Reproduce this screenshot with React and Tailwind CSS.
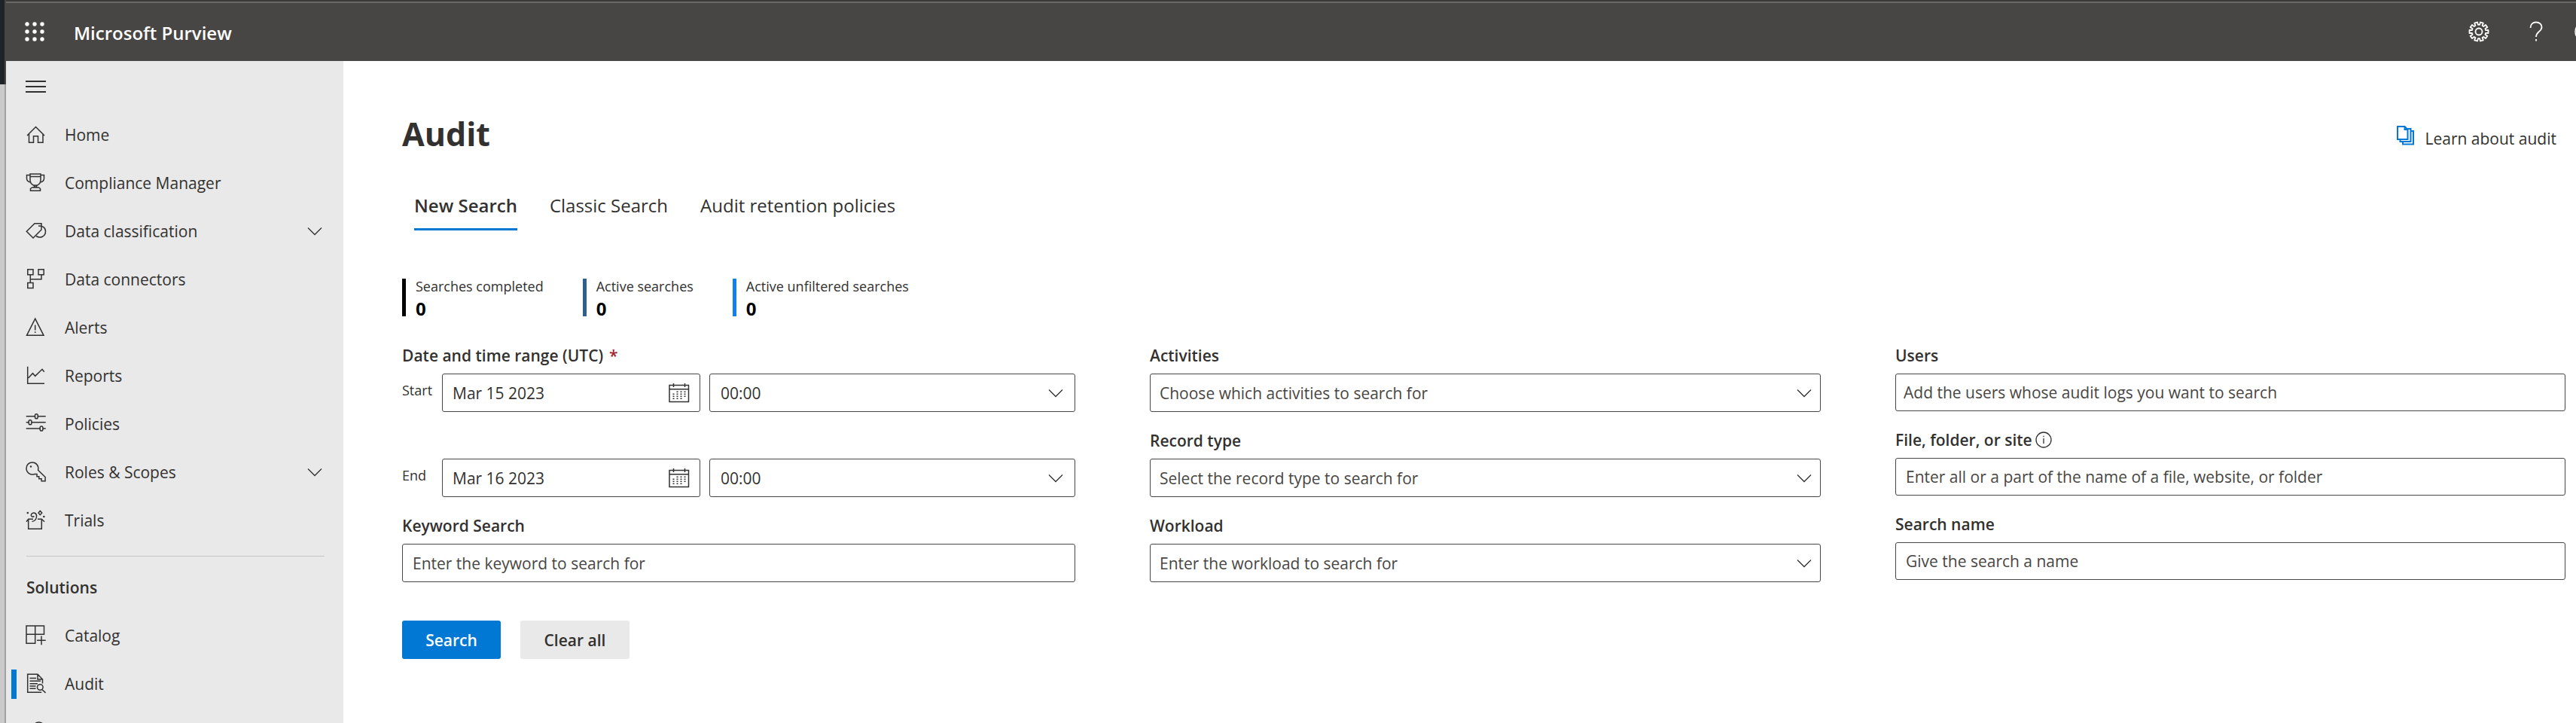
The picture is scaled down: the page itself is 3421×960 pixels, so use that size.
const STROKE = { fill: "none", stroke: "currentColor", strokeWidth: 1.5 };

function Icon({ children, className = "" }) {
  return (
    <svg viewBox="0 0 28 28" className={`size-7 shrink-0 ${className}`} {...STROKE} aria-hidden="true">
      {children}
    </svg>
  );
}

const icons = {
  home: <path d="M2 15 13.5 3.5 25 15M4.5 13v11.2h6V15.7h6v8.5h6.500V13" />,
  trophy: (
    <path d="M6 2h14v8c0 4-2.500 6-4.500 7h-5C8.500 16 6 14 6 10zM6 5.500h14M6 3.500H1.500V8c0 3 2 4.500 5 5M20 3.500h4.500V8c0 3-2 4.500-5 5M10.500 17l1.500 1.500-1.500 1.500M15.500 17 14 18.500l1.500 1.500M6.500 24.200v-2.700L8.500 20h9l2 1.500v2.700z" />
  ),
  tag: <path d="M1.300 14.300 12 3.700h9V12L10 23zM17 7c5-.5 9.500 2 9.500 7.300 0 6.700-7 9.700-12.500 6.200" />,
  connectors: <path d="M2.800.8H10v7H2.800zM17 .8h7.200v7H17zM2.800 18.500H10v7H2.800zM6.300 8v10.500M6.300 13.700H21V8" />,
  alert: <path d="M12.700 2.200 24 24.300H1.500zM12.700 10.500v7M12.700 19.300v1.700" />,
  chart: <path d="M2.700 1.700v22.600H25M3.500 17l6-6.300 3.200 3.600 9.300-9 2.700 3.400" />,
  sliders: (
    <>
      <path d="M.7 3.700h11.800M16.200 3.700h10.500M.7 11.700h3.500M8 11.700h18.700M.7 20h18.500M23 20h3.700" />
      <rect x="12.500" y=".8" width="3.700" height="6" rx="1.800" />
      <rect x="4.200" y="8.700" width="3.700" height="6" rx="1.800" />
      <rect x="19.200" y="17" width="3.700" height="6" rx="1.800" />
    </>
  ),
  key: (
    <>
      <path d="M12 16.500C6.500 18.500 1 14.500 1 9 1 4 4.500 1 9 1c5 0 9 4.500 7.600 10.200l9.500 9.300v5.200h-5v-3h-3.300v-3H15v-3.200z" />
      <circle cx="7" cy="6.500" r="1.200" fill="currentColor" stroke="none" />
    </>
  ),
  trials: (
    <>
      <path d="M1 15.700l2.700-3.400H10M3.700 12.300v13h17.600v-13M16 12.300h5.300l3.700 3.400M8.500 15.500c4-.3 6.700-4 6-8C14 3.500 9 2.700 7.500 6c-.8 2.500 2 4.500 3.800 2.200M19.300 1.300l2.400 2.700-2.400 2.700L17 4z" />
      <circle cx="2.800" cy="4" r="1.300" fill="currentColor" stroke="none" />
      <circle cx="24.300" cy="9" r="1.300" fill="currentColor" stroke="none" />
    </>
  ),
  catalog: <path d="M1 1h23.500v11.300H1zM12.700 1v23.300H1V12M21 14.500v11.700M15 20.300h11.700" />,
  audit: (
    <>
      <path d="M22.500 13.500V8L16 1.200H2.700v24.100h18.500M16 1.200V8h6.500M5.500 6.500H14M5.500 10.300h14.500M5.500 13.700H16M5.500 17h8M5.500 20.300h8M22 21.700l4.500 4.200" />
      <circle cx="19.300" cy="18.500" r="3.800" />
    </>
  ),
  search: (
    <>
      <circle cx="17.500" cy="9" r="8" />
      <path d="M12 15 1 26" />
    </>
  ),
};

function Chevron() {
  return (
    <svg viewBox="0 0 20 12" className="h-3 w-5 shrink-0" {...STROKE} strokeWidth="1.300" aria-hidden="true">
      <path d="m1 1.500 9 9 9-9" />
    </svg>
  );
}

function CalendarIcon() {
  return (
    <svg viewBox="0 0 28 26" className="h-[26px] w-7" {...STROKE} aria-hidden="true">
      <path d="M1 2.500h25.500v22H1zM1 7.700h25.500M6.500 0v5M21.500 0v5" />
      <path strokeWidth="2" strokeDasharray="1.500 1.500" d="M6.500 13.500v8M11.500 10.500v11M16.500 10.500v11M21.500 10.500v8" />
    </svg>
  );
}

const TEETH = 10;
const gearPath = (() => {
  const points = [];
  for (let i = 0; i < TEETH; i++) {
    const mid = (i + 0.5) * ((2 * Math.PI) / TEETH) - Math.PI / 2;
    for (const [r, off] of [[9.3, -0.2], [12.7, -0.16], [12.7, 0.16], [9.3, 0.2]]) {
      points.push(`${(14 + r * Math.cos(mid + off)).toFixed(1)} ${(14 + r * Math.sin(mid + off)).toFixed(1)}`);
    }
  }
  return `M${points.join("L")}Z`;
})();

function NavItem({ icon, label, expandable, active }) {
  return (
    <li className="flex h-16 items-center">
      <span className={`ml-[7px] h-[39px] w-[7px] shrink-0 ${active ? "bg-[#0078d4]" : ""}`} />
      <a href="#" className="flex h-full grow items-center gap-6 pr-7 pl-3">
        <Icon>{icons[icon]}</Icon>
        {label && <span className="grow whitespace-nowrap">{label}</span>}
        {expandable && <Chevron />}
      </a>
    </li>
  );
}

const mainNav = [
  { icon: "home", label: "Home" },
  { icon: "trophy", label: "Compliance Manager" },
  { icon: "tag", label: "Data classification", expandable: true },
  { icon: "connectors", label: "Data connectors" },
  { icon: "alert", label: "Alerts" },
  { icon: "chart", label: "Reports" },
  { icon: "sliders", label: "Policies" },
  { icon: "key", label: "Roles & Scopes", expandable: true },
  { icon: "trials", label: "Trials" },
];

const BOX = "w-full rounded-[3px] border border-[#484644] bg-white";

function Label({ htmlFor, children }) {
  return (
    <label htmlFor={htmlFor} className="mb-2 flex h-8 items-center font-semibold whitespace-nowrap">
      {children}
    </label>
  );
}

function Select({ id, text, label, muted }) {
  return (
    <div className="relative flex grow items-center">
      <select
        id={id}
        aria-label={label}
        className={`${BOX} h-[51px] appearance-none ${muted ? "px-3 text-[#484644]" : "px-3.5"}`}
      >
        <option>{text}</option>
      </select>
      <span className={`pointer-events-none absolute ${muted ? "right-3" : "right-4"}`}>
        <Chevron />
      </span>
    </div>
  );
}

function DateRow({ name, date }) {
  const id = `${name.toLowerCase()}-date`;
  return (
    <div className="flex">
      <label htmlFor={id} className="w-[53px] shrink-0 pt-1.5 text-lg leading-8">
        {name}
      </label>
      <div className="relative mr-3 flex w-[343px] shrink-0 items-center">
        <input id={id} type="text" defaultValue={date} className={`${BOX} h-[51px] px-[13px]`} />
        <span className="pointer-events-none absolute right-3.5">
          <CalendarIcon />
        </span>
      </div>
      <Select id={`${name.toLowerCase()}-time`} label={`${name} time`} text="00:00" />
    </div>
  );
}

function SelectField({ id, label, text }) {
  return (
    <div>
      <Label htmlFor={id}>{label}</Label>
      <Select id={id} text={text} muted />
    </div>
  );
}

function TextField({ id, label, placeholder, size, info }) {
  return (
    <div>
      <Label htmlFor={id}>
        {label}
        {info && (
          <svg viewBox="0 0 22 22" className="ml-1 size-[22px]" {...STROKE} strokeWidth="1.300" aria-hidden="true">
            <circle cx="11" cy="11" r="10" />
            <path d="M11 9v7M11 5.700v1.600" />
          </svg>
        )}
      </Label>
      <input
        id={id}
        type="text"
        placeholder={placeholder}
        className={`${BOX} ${size} block placeholder:text-[#484644]`}
      />
    </div>
  );
}

const tabs = ["New Search", "Classic Search", "Audit retention policies"];

const stats = [
  { label: "Searches completed", bar: "border-black" },
  { label: "Active searches", bar: "border-[#2f5f8f]" },
  { label: "Active unfiltered searches", bar: "border-[#1080f0]" },
];

export default function App() {
  return (
    <div className="flex h-screen overflow-hidden bg-white font-['Open_Sans','Noto_Sans',sans-serif] text-[21px] leading-8 text-[#323130]">
      <div className="flex w-2 shrink-0 flex-col">
        <div className="h-28 border-r-2 border-[#484644] bg-[#1f2428]" />
        <div className="grow border-r-2 border-[#a0a0a0] bg-[#cacaca]" />
      </div>
      <div className="flex min-w-0 grow flex-col">
        <header className="flex h-[81px] shrink-0 items-center overflow-hidden border-t-2 border-[#3b3a39] bg-[#484644] text-white shadow-[inset_0_2px_0_#6b6967]">
          <button type="button" aria-label="App launcher" className="ml-[25px]">
            <svg viewBox="0 0 26 26" className="size-[26px]" fill="currentColor" aria-hidden="true">
              {[3, 13, 23].map((y) => [3, 13, 23].map((x) => <circle key={`${x}-${y}`} cx={x} cy={y} r="2.700" />))}
            </svg>
          </button>
          <span className="ml-[39px] grow pt-1 text-2xl leading-8 font-semibold">Microsoft Purview</span>
          <div className="-mr-[39px] flex shrink-0">
            <button type="button" aria-label="Settings" className="flex w-[76px] justify-center">
              <Icon>
                <path d={gearPath} strokeWidth="1.800" strokeLinejoin="round" />
                <circle cx="14" cy="14" r="4.500" strokeWidth="1.800" />
              </Icon>
            </button>
            <button type="button" aria-label="Help" className="flex w-[76px] justify-center">
              <Icon>
                <path
                  strokeWidth="1.800"
                  d="M6.500 9C6.500 4 10 1.500 14 1.500s7.500 2.500 7.500 6.500c0 6-7.500 6-7.500 13M14 24v2.500"
                />
              </Icon>
            </button>
            <button type="button" aria-label="Feedback" className="flex w-[54px] justify-center">
              <Icon>
                <circle cx="14" cy="14" r="13" />
              </Icon>
            </button>
          </div>
        </header>
        <div className="flex min-h-0 grow">
          <nav className="w-[448px] shrink-0 overflow-hidden bg-[#e9e9e9]">
            <button type="button" aria-label="Collapse navigation" className="flex h-[66px] items-center pt-0.5 pl-[26px]">
              <Icon>
                <path strokeWidth="2" d="M0 7h27M0 14h27M0 21h27" />
              </Icon>
            </button>
            <ul>
              {mainNav.map((item) => (
                <NavItem key={item.label} {...item} />
              ))}
            </ul>
            <hr className="mt-[15px] mr-[25px] mb-[9px] ml-[27px] border-[#c8c6c4]" />
            <h2 className="flex h-16 items-center pl-[27px] font-semibold">Solutions</h2>
            <ul>
              <NavItem icon="catalog" label="Catalog" />
              <NavItem icon="audit" label="Audit" active />
              <NavItem icon="search" />
            </ul>
          </nav>
          <main className="min-w-0 grow pt-[65px] pr-3.5 pl-[78px]">
            <div className="flex items-center justify-between pr-3">
              <h1 className="text-[43px] leading-[64px] font-bold">Audit</h1>
              <a href="#" className="mt-1 flex items-center gap-3.5">
                <svg viewBox="0 0 24 26" className="h-[26px] w-6 text-[#0078d4]" {...STROKE} strokeWidth="2" aria-hidden="true">
                  <path d="M1 1h9.500l4 4v13H1zM10.500 1v4h4M14.500 4h4v17H4.500v-3M18.500 7H22v17.500H8V21" />
                </svg>
                <span className="pt-2">Learn about audit</span>
              </a>
            </div>
            <div role="tablist" className="mt-8 ml-4 flex gap-[43px] text-2xl">
              {tabs.map((tab, i) => (
                <button
                  key={tab}
                  type="button"
                  role="tab"
                  aria-selected={i === 0}
                  className={`h-16 border-b-[3px] ${i === 0 ? "border-[#0078d4] font-semibold" : "border-transparent"}`}
                >
                  {tab}
                </button>
              ))}
            </div>
            <div className="mt-16 flex gap-[52px]">
              {stats.map((s) => (
                <div key={s.label} className={`h-[50px] border-l-[5px] pl-[13px] ${s.bar}`}>
                  <div className="text-lg leading-[20px]">{s.label}</div>
                  <div className="text-2xl leading-10 font-bold text-black">0</div>
                </div>
              ))}
            </div>
            <form className="mt-9">
              <div className="grid grid-cols-[894fr_891fr_890fr] gap-x-[99px]">
                <div className="flex flex-col gap-[22px]">
                  <div>
                    <Label htmlFor="start-date">
                      Date and time range (UTC) <span className="ml-2 text-[#a4262c]">*</span>
                    </Label>
                    <DateRow name="Start" date="Mar 15 2023" />
                  </div>
                  <div className="pt-10">
                    <DateRow name="End" date="Mar 16 2023" />
                  </div>
                  <TextField
                    id="keyword"
                    label="Keyword Search"
                    placeholder="Enter the keyword to search for"
                    size="h-[51px] px-[13px]"
                  />
                </div>
                <div className="flex flex-col gap-[22px]">
                  <SelectField id="activities" label="Activities" text="Choose which activities to search for" />
                  <SelectField id="record-type" label="Record type" text="Select the record type to search for" />
                  <SelectField id="workload" label="Workload" text="Enter the workload to search for" />
                </div>
                <div className="flex flex-col gap-[22px]">
                  <TextField
                    id="users"
                    label="Users"
                    placeholder="Add the users whose audit logs you want to search"
                    size="h-[50px] px-2.5"
                  />
                  <TextField
                    id="file"
                    label="File, folder, or site"
                    placeholder="Enter all or a part of the name of a file, website, or folder"
                    size="h-[50px] px-[13px]"
                    info
                  />
                  <TextField
                    id="search-name"
                    label="Search name"
                    placeholder="Give the search a name"
                    size="h-[50px] px-[13px]"
                  />
                </div>
              </div>
              <div className="mt-[51px] flex gap-[26px] font-semibold">
                <button type="button" className="h-[51px] w-[131px] rounded-[3px] bg-[#0078d4] text-white">
                  Search
                </button>
                <button type="button" className="h-[51px] w-[145px] rounded-[3px] bg-[#e9e9e9]">
                  Clear all
                </button>
              </div>
            </form>
          </main>
        </div>
      </div>
    </div>
  );
}
